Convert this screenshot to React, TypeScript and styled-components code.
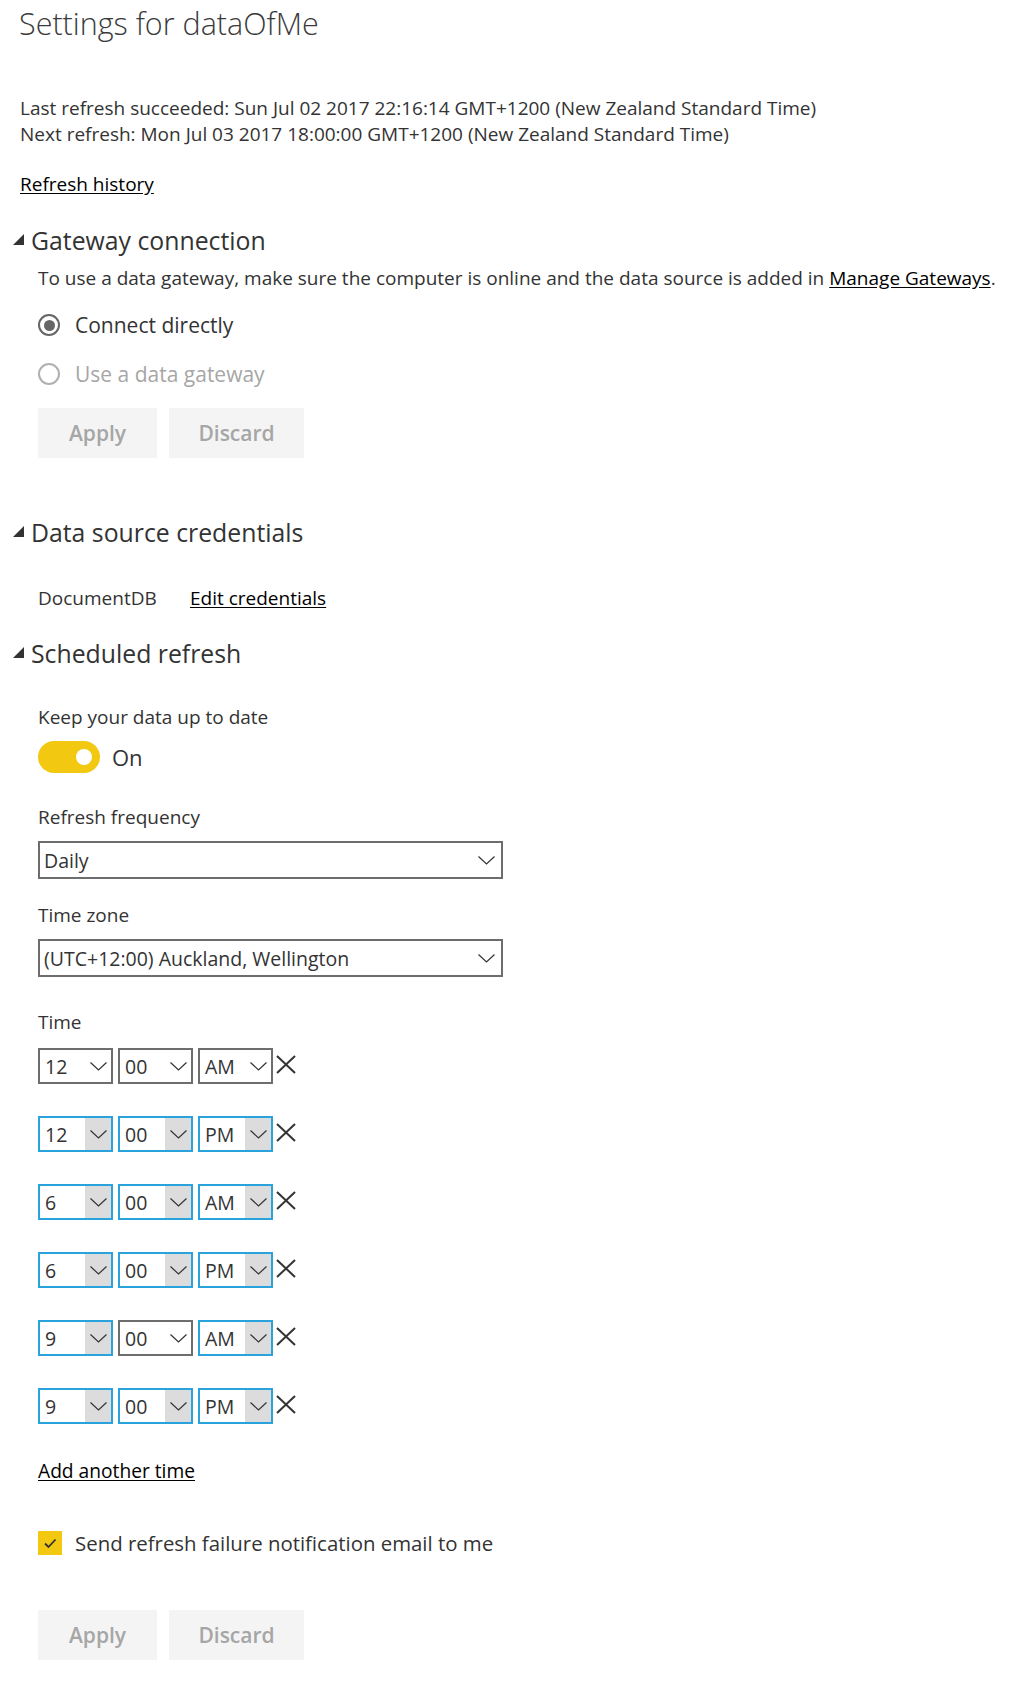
import React from "react";
import styled, { createGlobalStyle } from "styled-components";

const GlobalStyle = createGlobalStyle`
  body {
    margin: 0;
    background: #fff;
    color: #333;
    font-family: "Open Sans", "Noto Sans", sans-serif;
  }
`;

type TimeSlot = {
  hour: string;
  period: string;
  focused: [boolean, boolean, boolean];
};

const timeSlots: TimeSlot[] = [
  { hour: "12", period: "AM", focused: [false, false, false] },
  { hour: "12", period: "PM", focused: [true, true, true] },
  { hour: "6", period: "AM", focused: [true, true, true] },
  { hour: "6", period: "PM", focused: [true, true, true] },
  { hour: "9", period: "AM", focused: [true, false, true] },
  { hour: "9", period: "PM", focused: [true, true, true] },
];

const Chevron: React.FC = () => (
  <svg width="17" height="9" viewBox="0 0 17 9">
    <polyline points="0.5,0.5 8.5,8 16.5,0.5" fill="none" stroke="#333" strokeWidth="1.2" />
  </svg>
);

const Caret: React.FC = () => (
  <svg width="11" height="11" viewBox="0 0 11 11">
    <polygon points="11,0 11,11 0,11" fill="#333" />
  </svg>
);

const RemoveIcon: React.FC = () => (
  <svg width="20" height="19" viewBox="0 0 20 19">
    <line x1="1" y1="1" x2="19" y2="18" stroke="#333" strokeWidth="2" />
    <line x1="19" y1="1" x2="1" y2="18" stroke="#333" strokeWidth="2" />
  </svg>
);

const TimeSelect: React.FC<{ value: string; focused: boolean }> = ({ value, focused }) => (
  <SelectBox $focused={focused}>
    <SelectValue>{value}</SelectValue>
    <SelectArrow $focused={focused}>
      <Chevron />
    </SelectArrow>
  </SelectBox>
);

const App: React.FC = () => {
  return (
    <Page>
      <GlobalStyle />
      <Title>Settings for dataOfMe</Title>
      <Status>
        <div>Last refresh succeeded: Sun Jul 02 2017 22:16:14 GMT+1200 (New Zealand Standard Time)</div>
        <div>Next refresh: Mon Jul 03 2017 18:00:00 GMT+1200 (New Zealand Standard Time)</div>
      </Status>
      <HistoryLink href="#">Refresh history</HistoryLink>

      <SectionHeading $top={30}>
        <Caret />
        Gateway connection
      </SectionHeading>
      <Section>
        <Description>
          To use a data gateway, make sure the computer is online and the data source is added in{" "}
          <Link href="#">Manage Gateways</Link>.
        </Description>
        <RadioRow $top={21}>
          <Radio $checked />
          Connect directly
        </RadioRow>
        <RadioRow $top={19} $disabled>
          <Radio />
          Use a data gateway
        </RadioRow>
        <ButtonRow $top={19}>
          <Button $width={119}>Apply</Button>
          <Button $width={135}>Discard</Button>
        </ButtonRow>
      </Section>

      <SectionHeading $top={59}>
        <Caret />
        Data source credentials
      </SectionHeading>
      <Section>
        <CredentialRow>
          <span>DocumentDB</span>
          <Link href="#">Edit credentials</Link>
        </CredentialRow>
      </Section>

      <SectionHeading $top={28}>
        <Caret />
        Scheduled refresh
      </SectionHeading>
      <Section>
        <Label $top={37}>Keep your data up to date</Label>
        <ToggleRow>
          <Toggle>
            <Knob />
          </Toggle>
          On
        </ToggleRow>

        <Label $top={32}>Refresh frequency</Label>
        <Dropdown>
          Daily
          <Chevron />
        </Dropdown>

        <Label $top={24}>Time zone</Label>
        <Dropdown>
          (UTC+12:00) Auckland, Wellington
          <Chevron />
        </Dropdown>

        <Label $top={33}>Time</Label>
        <TimeList>
          {timeSlots.map((slot, i) => (
            <TimeRow key={i}>
              <TimeSelect value={slot.hour} focused={slot.focused[0]} />
              <TimeSelect value="00" focused={slot.focused[1]} />
              <TimeSelect value={slot.period} focused={slot.focused[2]} />
              <RemoveButton>
                <RemoveIcon />
              </RemoveButton>
            </TimeRow>
          ))}
        </TimeList>

        <AddLink href="#">Add another time</AddLink>

        <CheckRow>
          <CheckBox>
            <svg width="24" height="24" viewBox="0 0 24 24">
              <polyline points="7,12.5 10.5,16 17.5,8.5" fill="none" stroke="#333" strokeWidth="1.8" />
            </svg>
          </CheckBox>
          Send refresh failure notification email to me
        </CheckRow>

        <ButtonRow $top={52}>
          <Button $width={119}>Apply</Button>
          <Button $width={135}>Discard</Button>
        </ButtonRow>
      </Section>
    </Page>
  );
};

const Page = styled.div`
  width: 1030px;
  padding-bottom: 31px;
`;

const Title = styled.h1`
  margin: 5px 0 0 19px;
  font-size: 30.5px;
  font-weight: 300;
  line-height: 36px;
  color: #3b3b3b;
`;

const Status = styled.div`
  margin: 54px 0 0 20px;
  font-size: 19px;
  line-height: 26px;
`;

const Link = styled.a`
  color: #000;
  text-decoration: underline;
  text-underline-offset: 2px;
`;

const HistoryLink = styled(Link)`
  display: block;
  width: max-content;
  margin: 26px 0 0 20px;
  font-size: 19px;
  line-height: 22px;
`;

const SectionHeading = styled.h2<{ $top: number }>`
  display: flex;
  align-items: center;
  gap: 7px;
  margin: ${(p) => p.$top}px 0 0 13px;
  font-size: 24.8px;
  font-weight: 400;
  line-height: 30px;
  color: #333;

  svg {
    margin-top: -1px;
  }
`;

const Section = styled.div`
  padding-left: 38px;
`;

const Description = styled.p`
  margin: 12px 0 0;
  font-size: 19px;
  line-height: 22px;
`;

const RadioRow = styled.label<{ $top: number; $disabled?: boolean }>`
  display: flex;
  align-items: center;
  gap: 15px;
  height: 30px;
  margin-top: ${(p) => p.$top}px;
  font-size: 21px;
  color: ${(p) => (p.$disabled ? "#a6a6a6" : "#333")};
`;

const Radio = styled.span<{ $checked?: boolean }>`
  box-sizing: border-box;
  display: flex;
  align-items: center;
  justify-content: center;
  width: 22px;
  height: 22px;
  border: 2.5px solid ${(p) => (p.$checked ? "#666" : "#b0b0b0")};
  border-radius: 50%;

  &::after {
    content: "";
    display: ${(p) => (p.$checked ? "block" : "none")};
    width: 11px;
    height: 11px;
    border-radius: 50%;
    background: #666;
  }
`;

const ButtonRow = styled.div<{ $top: number }>`
  display: flex;
  gap: 12px;
  margin-top: ${(p) => p.$top}px;
`;

const Button = styled.button<{ $width: number }>`
  width: ${(p) => p.$width}px;
  height: 50px;
  border: none;
  background: #f4f4f4;
  color: #a6a6a6;
  font-family: inherit;
  font-size: 21px;
  font-weight: 600;
  padding: 0;
`;

const CredentialRow = styled.div`
  display: grid;
  grid-template-columns: 152px auto;
  justify-content: start;
  margin-top: 39px;
  font-size: 19px;
  line-height: 24px;
`;

const Label = styled.div<{ $top: number }>`
  margin-top: ${(p) => p.$top}px;
  font-size: 19px;
  line-height: 24px;
`;

const ToggleRow = styled.div`
  display: flex;
  align-items: center;
  gap: 12px;
  margin-top: 12px;
  height: 32px;
  font-size: 22px;
`;

const Toggle = styled.span`
  display: flex;
  align-items: center;
  justify-content: flex-end;
  box-sizing: border-box;
  width: 62px;
  height: 32px;
  padding-right: 8px;
  border-radius: 16px;
  background: #f2c811;
`;

const Knob = styled.span`
  width: 16px;
  height: 16px;
  border-radius: 50%;
  background: #fff;
`;

const Dropdown = styled.div`
  box-sizing: border-box;
  display: flex;
  align-items: center;
  justify-content: space-between;
  width: 465px;
  height: 38px;
  margin-top: 12px;
  padding: 0 6px 0 4px;
  border: 2px solid #6d6d6d;
  font-size: 19.5px;
`;

const TimeList = styled.div`
  display: flex;
  flex-direction: column;
  gap: 32px;
  margin-top: 14px;
`;

const TimeRow = styled.div`
  display: flex;
  align-items: center;
  gap: 5px;
  height: 36px;
`;

const SelectBox = styled.div<{ $focused: boolean }>`
  box-sizing: border-box;
  display: flex;
  width: 75px;
  height: 36px;
  border: 2px solid ${(p) => (p.$focused ? "#29a3dc" : "#6d6d6d")};
  font-size: 19.5px;
`;

const SelectValue = styled.span`
  flex: 1;
  display: flex;
  align-items: center;
  padding-left: 5px;
`;

const SelectArrow = styled.span<{ $focused: boolean }>`
  display: flex;
  align-items: center;
  justify-content: center;
  width: 26px;
  background: ${(p) => (p.$focused ? "#dcdcdc" : "transparent")};
`;

const RemoveButton = styled.span`
  display: flex;
  margin-left: -2px;
  margin-top: -4px;
`;

const AddLink = styled(Link)`
  display: block;
  width: max-content;
  margin-top: 35px;
  font-size: 19.2px;
  line-height: 24px;
`;

const CheckRow = styled.label`
  display: flex;
  align-items: center;
  gap: 13px;
  height: 30px;
  margin-top: 45px;
  font-size: 20.4px;
`;

const CheckBox = styled.span`
  display: flex;
  width: 24px;
  height: 24px;
  background: #f2c811;
`;

export default App;
